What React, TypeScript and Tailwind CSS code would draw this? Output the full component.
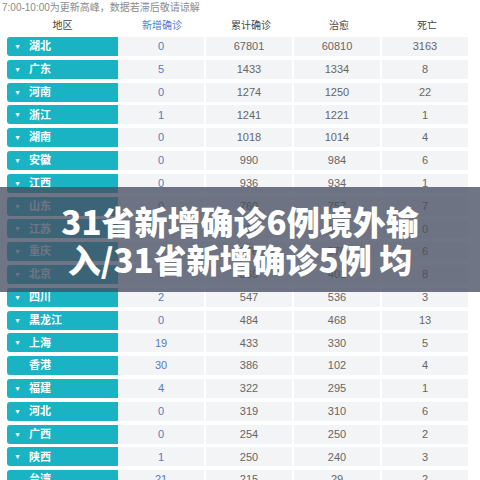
const rows: [string, string, string, string, string, boolean][] = [
  ["湖北", "0", "67801", "60810", "3163", true],
  ["广东", "5", "1433", "1334", "8", true],
  ["河南", "0", "1274", "1250", "22", true],
  ["浙江", "1", "1241", "1221", "1", true],
  ["湖南", "0", "1018", "1014", "4", true],
  ["安徽", "0", "990", "984", "6", true],
  ["江西", "0", "936", "934", "1", true],
  ["山东", "0", "760", "757", "7", true],
  ["江苏", "0", "631", "631", "0", true],
  ["重庆", "0", "576", "570", "6", true],
  ["北京", "0", "569", "401", "8", true],
  ["四川", "2", "547", "536", "3", true],
  ["黑龙江", "0", "484", "468", "13", true],
  ["上海", "19", "433", "330", "5", true],
  ["香港", "30", "386", "102", "4", false],
  ["福建", "4", "322", "295", "1", true],
  ["河北", "0", "319", "310", "6", true],
  ["广西", "0", "254", "250", "2", true],
  ["陕西", "1", "250", "240", "3", true],
  ["台湾", "21", "215", "29", "2", false],
];

const cell = "flex items-center justify-center bg-[#f3f4f6] text-[11px]";

export default function App() {
  return (
    <div
      className="relative w-[480px] h-[480px] overflow-hidden bg-white"
      style={{ fontFamily: '"Liberation Sans", "Noto Sans CJK SC", sans-serif' }}
    >
      <div className="pl-[2px] pt-[1px] h-[14px] text-[10px] leading-[13px] text-[#8a8a8a]">
        7:00-10:00为更新高峰，数据若滞后敬请谅解
      </div>

      <div className="pl-[7px]">
        <div className="grid grid-cols-[111px_86px_86px_86px_86px] gap-x-[2px] h-[23px] items-center text-[10px] text-[#444]">
          <div className="text-center">地区</div>
          <div className="text-center text-[#4f79d6] -ml-[2px]">新增确诊</div>
          <div className="text-center">累计确诊</div>
          <div className="text-center">治愈</div>
          <div className="text-center">死亡</div>
        </div>

        <div className="flex flex-col gap-y-[3.8px]">
          {rows.map(([name, add, total, cured, dead, arrow]) => (
            <div key={name} className="flex h-[19px]">
              <div className="flex w-[111px] items-center rounded-l-[3px] bg-[#19b3c4] pl-[7px] text-[11px] font-bold text-white">
                <span className="w-[9px] text-[7px] leading-none">{arrow ? "▼" : ""}</span>
                <span className="ml-[6px]">{name}</span>
              </div>
              <div className={`${cell} w-[86px] text-[#5b79bf]`}>{add}</div>
              <div className={`${cell} ml-[2px] w-[86px] text-[#666]`}>{total}</div>
              <div className={`${cell} ml-[2px] w-[86px] text-[#666]`}>{cured}</div>
              <div className={`${cell} ml-[2px] w-[86px] text-[#666]`}>{dead}</div>
            </div>
          ))}
        </div>
      </div>

      <div
        className="absolute left-0 top-[187px] flex h-[105px] w-[480px] flex-col items-center justify-center bg-[rgba(70,78,98,0.78)] text-[33px] font-black leading-[38px] text-white"
        style={{ fontFamily: '"Noto Sans CJK SC", sans-serif' }}
      >
        <div>31省新增确诊6例境外输</div>
        <div>入/31省新增确诊5例 均</div>
      </div>
    </div>
  );
}
